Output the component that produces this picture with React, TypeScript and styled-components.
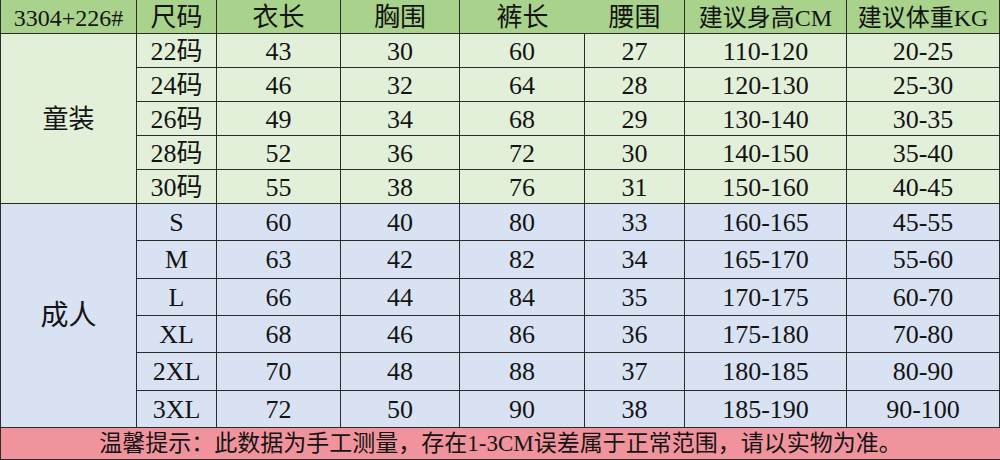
import styled, { createGlobalStyle } from 'styled-components';

const GlobalStyle = createGlobalStyle`
    html, body {
        margin: 0;
        padding: 0;
        background: #ffffff;
    }
    body {
        font-family: "Liberation Serif", "Noto Sans CJK SC", serif;
        color: #141414;
    }
`

const Chart = styled.div`
    width: 1000px;
    height: 460px;
    box-sizing: border-box;
    border-left: 1px solid #2b2b2b;
    display: grid;
    grid-template-columns: 136px 80px 124px 119px 125px 100px 162px 153px;
    grid-template-rows: 34px repeat(5, 34px) repeat(6, 37.33px) 32px;
    grid-auto-flow: row dense;
`

const Cell = styled.div<{ $bg: string; $span?: number; $noRight?: boolean; $size?: number }>`
    box-sizing: border-box;
    background: ${props => props.$bg};
    border-right: ${props => props.$noRight ? 'none' : '1px solid #2b2b2b'};
    border-bottom: 1px solid #2b2b2b;
    display: flex;
    align-items: center;
    justify-content: center;
    padding-top: 2px;
    font-size: ${props => props.$size ?? 26}px;
    line-height: 1;
    white-space: nowrap;
    grid-row: ${props => props.$span ? `span ${props.$span}` : 'auto'};
`

const Footer = styled.div`
    grid-column: 1 / -1;
    box-sizing: border-box;
    background: #f1939d;
    border-bottom: 1px solid #2b2b2b;
    display: flex;
    align-items: center;
    justify-content: center;
    font-size: 23px;
    line-height: 1;
    padding-top: 1px;
    white-space: nowrap;
`

const HEAD_BG = '#a9d38c'
const KID_BG = '#e3f0d9'
const ADULT_BG = '#d9e2f3'

const headers = ['3304+226#', '尺码', '衣长', '胸围', '裤长', '腰围', '建议身高CM', '建议体重KG']

const kids = [
    ['22码', '43', '30', '60', '27', '110-120', '20-25'],
    ['24码', '46', '32', '64', '28', '120-130', '25-30'],
    ['26码', '49', '34', '68', '29', '130-140', '30-35'],
    ['28码', '52', '36', '72', '30', '140-150', '35-40'],
    ['30码', '55', '38', '76', '31', '150-160', '40-45'],
]

const adults = [
    ['S', '60', '40', '80', '33', '160-165', '45-55'],
    ['M', '63', '42', '82', '34', '165-170', '55-60'],
    ['L', '66', '44', '84', '35', '170-175', '60-70'],
    ['XL', '68', '46', '86', '36', '175-180', '70-80'],
    ['2XL', '70', '48', '88', '37', '180-185', '80-90'],
    ['3XL', '72', '50', '90', '38', '185-190', '90-100'],
]

export default function App() {
    return <>
        <GlobalStyle />
        <Chart>
            {headers.map((h, i) => (
                <Cell key={h} $bg={HEAD_BG} $noRight={i === 4} $size={i === 0 || i > 5 ? 24 : 26}>{h}</Cell>
            ))}
            <Cell $bg={KID_BG} $span={5} $size={26}>童装</Cell>
            {kids.map(row => row.map((v, i) => (
                <Cell key={row[0] + i} $bg={KID_BG}>{v}</Cell>
            )))}
            <Cell $bg={ADULT_BG} $span={6} $size={28}>成人</Cell>
            {adults.map(row => row.map((v, i) => (
                <Cell key={row[0] + i} $bg={ADULT_BG}>{v}</Cell>
            )))}
            <Footer>温馨提示：此数据为手工测量，存在1-3CM误差属于正常范围，请以实物为准。</Footer>
        </Chart>
    </>
}
